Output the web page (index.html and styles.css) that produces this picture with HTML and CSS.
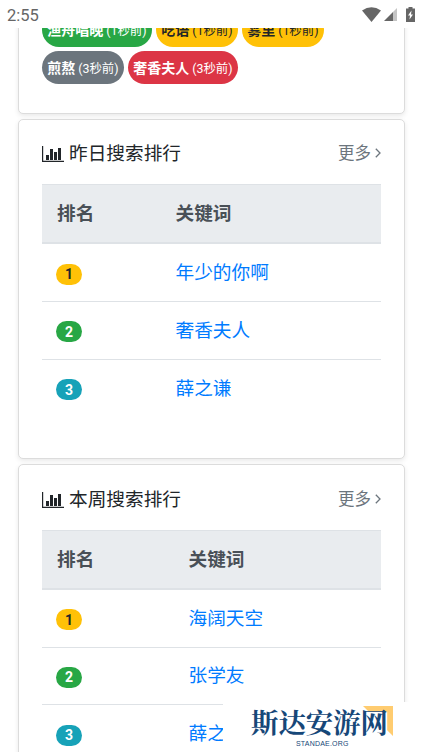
FILE: index.html
```
<!DOCTYPE html>
<html lang="zh-CN">
<head>
<meta charset="utf-8">
<meta name="viewport" content="width=device-width, initial-scale=1">
<title>搜索排行</title>
<link rel="stylesheet" href="styles.css">
</head>
<body>
<svg class="defs" aria-hidden="true">
  <symbol id="chart" viewBox="0 0 22 18"><path d="M0 1h1.200v14.800H22V17H0zM4 10h3v5H4zM8 4h3v11H8zM12 7h3v8h-3zM16 3h3v12h-3z"/></symbol>
  <symbol id="chevron" viewBox="0 0 6 10"><path d="M.8.8 5 5 .8 9.200" fill="none" stroke="currentColor" stroke-width="1.300"/></symbol>
</svg>
<header class="status">
  <span class="clock">2:55</span>
  <svg class="wifi" viewBox="0 0 19 15"><path d="M0 3.500Q9.500-3 19 3.500L9.500 15z"/></svg>
  <svg class="signal" viewBox="0 0 13 13"><path d="M0 13 9 4v9z"/><path class="faint" d="M9 4l4-4v13H9z"/></svg>
  <svg class="battery" viewBox="0 0 9 15"><path d="M2.500 0h4v1.500H9V15H0V1.500h2.500z"/><path class="bolt" d="M5.500 3.500 2 8.500h2l-.5 4L7 7.500H5z"/></svg>
</header>
<main>
  <section class="card recent">
    <div class="tags">
      <span class="tag green"><b>渔舟唱晚</b> <small>(1秒前)</small></span>
      <span class="tag yellow"><b>呓语</b> <small>(1秒前)</small></span>
      <span class="tag yellow"><b>雾里</b> <small>(1秒前)</small></span>
      <span class="tag gray"><b>煎熬</b> <small>(3秒前)</small></span>
      <span class="tag red"><b>奢香夫人</b> <small>(3秒前)</small></span>
    </div>
  </section>
  <section class="card rank">
    <div class="heading"><svg class="chart"><use href="#chart"/></svg><h2>昨日搜索排行</h2><a class="more">更多<svg><use href="#chevron"/></svg></a></div>
    <div class="table">
      <div class="row head"><span>排名</span><span>关键词</span></div>
      <div class="row"><span><i class="num yellow">1</i></span><a>年少的你啊</a></div>
      <div class="row"><span><i class="num green">2</i></span><a>奢香夫人</a></div>
      <div class="row"><span><i class="num teal">3</i></span><a>薛之谦</a></div>
    </div>
  </section>
  <section class="card rank week">
    <div class="heading"><svg class="chart"><use href="#chart"/></svg><h2>本周搜索排行</h2><a class="more">更多<svg><use href="#chevron"/></svg></a></div>
    <div class="table">
      <div class="row head"><span>排名</span><span>关键词</span></div>
      <div class="row"><span><i class="num yellow">1</i></span><a>海阔天空</a></div>
      <div class="row"><span><i class="num green">2</i></span><a>张学友</a></div>
      <div class="row"><span><i class="num teal">3</i></span><a>薛之谦</a></div>
    </div>
  </section>
</main>
<aside class="brand">
  <svg class="corner" viewBox="0 0 31 31"><path d="M0 0h31v31l-6-6V6H6z"/></svg>
  <div class="brand-name">斯达安游网</div>
  <div class="brand-url">STANDAE.ORG</div>
</aside>
</body>
</html>
```
FILE: styles.css
```
* { box-sizing: border-box; }
html, body { height: 752px; overflow: hidden; }
body {
  margin: 0;
  position: relative;
  display: flex;
  flex-direction: column;
  background: #fff;
  color: #212529;
  font-family: Roboto, "Noto Sans CJK SC", sans-serif;
}
.defs { position: absolute; width: 0; height: 0; }
.status {
  flex: none;
  height: 28px;
  display: flex;
  align-items: center;
  padding: 0 8px 0 7px;
  color: #666;
  fill: #666;
}
.clock { flex: 1; font-size: 16.500px; padding-top: 2px; }
.wifi { width: 19px; height: 15px; margin-right: 3px; }
.signal { width: 13px; height: 13px; margin-right: 9px; }
.battery { width: 9px; height: 15px; }
.faint { fill: #c4c4c4; }
.bolt { fill: #fff; }
main {
  flex: 1;
  min-height: 0;
  overflow: hidden;
  padding: 0 18px;
}
.card {
  background: #fff;
  border: 1px solid #dcdcdc;
  border-radius: 5px;
  box-shadow: 0 2px 5px rgba(0, 0, 0, .09);
  margin-bottom: 5px;
  padding: 0 23px;
}
.recent { height: 101px; margin-top: -15px; }
.tags { display: flex; flex-wrap: wrap; gap: 4.300px; margin-top: -1px; }
.tag {
  display: flex;
  align-items: center;
  height: 33.600px;
  padding: 0 5.200px 1px;
  border-radius: 17px;
  white-space: nowrap;
  font-size: 14px;
}
.tag small { font-size: 12.400px; margin-left: 3px; padding-top: 1px; }
.green { background: #28a745; color: #fff; }
.yellow { background: #ffc107; color: #212529; }
.gray { background: #6c757d; color: #fff; }
.red { background: #dc3545; color: #fff; }
.teal { background: #17a2b8; color: #fff; }
.rank { height: 340px; }
.heading { height: 64px; display: flex; align-items: center; padding-top: 4px; }
.week .heading { height: 65px; padding-top: 5px; }
.chart { width: 22px; height: 18px; margin-right: 5px; fill: #212529; }
h2 { margin: 0; font-size: 18.670px; font-weight: 400; line-height: 28px; }
.more {
  display: flex;
  align-items: center;
  margin: -4px 0 0 auto;
  color: #6c757d;
  font-size: 16.500px;
}
.more svg { width: 6px; height: 10px; margin: 1px 0 0 4px; }
.table { font-size: 18.670px; }
.row {
  display: grid;
  grid-template-columns: 118.500px 1fr;
  align-items: center;
  height: 57.700px;
  padding: 0 15px;
  border-top: 1px solid #dee2e6;
}
.week .row { grid-template-columns: 131.500px 1fr; }
.row a { color: #007bff; margin-top: -4px; }
.head {
  height: 60px;
  padding-bottom: 4px;
  background: #e9ecef;
  color: #495057;
  font-weight: 700;
  border-bottom: 2px solid #dee2e6;
}
.head + .row { border-top: 0; height: 57px; }
.week .head + .row { height: 56.500px; }
.num {
  display: flex;
  align-items: center;
  justify-content: center;
  width: 26px;
  height: 21px;
  margin: 3px 0 0 -1px;
  border-radius: 11px;
  font-size: 14px;
  font-weight: 700;
  font-style: normal;
}
.brand {
  position: absolute;
  left: 223px;
  top: 702px;
  width: 200px;
  height: 50px;
  background: #fff;
  color: #164778;
}
.corner { position: absolute; left: 140px; top: 4px; width: 30px; height: 30px; fill: #ffcc70; }
.brand-name {
  position: relative;
  padding-left: 28px;
  font: 700 27.400px/38px "Noto Serif CJK SC", "Noto Sans CJK SC", serif;
}
.brand-url { padding-left: 73px; font: 7px/8px "Liberation Sans", sans-serif; letter-spacing: .2px; }
```
